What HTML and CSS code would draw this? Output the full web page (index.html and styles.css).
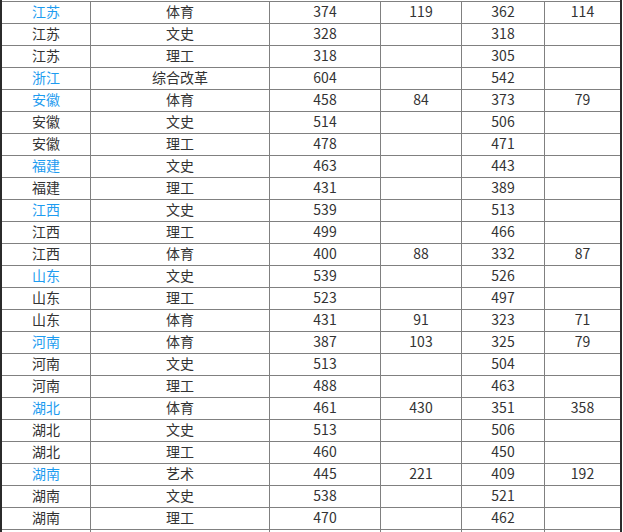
FILE: index.html
```html
<!DOCTYPE html>
<html lang="zh-CN">
<head>
<meta charset="utf-8">
<title>录取分数</title>
<link rel="stylesheet" href="styles.css">
</head>
<body>
<div class="sheet">
  <div class="grid">
    <div class="c prov first">江苏</div><div class="c">体育</div><div class="c">374</div><div class="c">119</div><div class="c">362</div><div class="c">114</div>
    <div class="c prov">江苏</div><div class="c">文史</div><div class="c">328</div><div class="c"></div><div class="c">318</div><div class="c"></div>
    <div class="c prov">江苏</div><div class="c">理工</div><div class="c">318</div><div class="c"></div><div class="c">305</div><div class="c"></div>
    <div class="c prov first">浙江</div><div class="c">综合改革</div><div class="c">604</div><div class="c"></div><div class="c">542</div><div class="c"></div>
    <div class="c prov first">安徽</div><div class="c">体育</div><div class="c">458</div><div class="c">84</div><div class="c">373</div><div class="c">79</div>
    <div class="c prov">安徽</div><div class="c">文史</div><div class="c">514</div><div class="c"></div><div class="c">506</div><div class="c"></div>
    <div class="c prov">安徽</div><div class="c">理工</div><div class="c">478</div><div class="c"></div><div class="c">471</div><div class="c"></div>
    <div class="c prov first">福建</div><div class="c">文史</div><div class="c">463</div><div class="c"></div><div class="c">443</div><div class="c"></div>
    <div class="c prov">福建</div><div class="c">理工</div><div class="c">431</div><div class="c"></div><div class="c">389</div><div class="c"></div>
    <div class="c prov first">江西</div><div class="c">文史</div><div class="c">539</div><div class="c"></div><div class="c">513</div><div class="c"></div>
    <div class="c prov">江西</div><div class="c">理工</div><div class="c">499</div><div class="c"></div><div class="c">466</div><div class="c"></div>
    <div class="c prov">江西</div><div class="c">体育</div><div class="c">400</div><div class="c">88</div><div class="c">332</div><div class="c">87</div>
    <div class="c prov first">山东</div><div class="c">文史</div><div class="c">539</div><div class="c"></div><div class="c">526</div><div class="c"></div>
    <div class="c prov">山东</div><div class="c">理工</div><div class="c">523</div><div class="c"></div><div class="c">497</div><div class="c"></div>
    <div class="c prov">山东</div><div class="c">体育</div><div class="c">431</div><div class="c">91</div><div class="c">323</div><div class="c">71</div>
    <div class="c prov first">河南</div><div class="c">体育</div><div class="c">387</div><div class="c">103</div><div class="c">325</div><div class="c">79</div>
    <div class="c prov">河南</div><div class="c">文史</div><div class="c">513</div><div class="c"></div><div class="c">504</div><div class="c"></div>
    <div class="c prov">河南</div><div class="c">理工</div><div class="c">488</div><div class="c"></div><div class="c">463</div><div class="c"></div>
    <div class="c prov first">湖北</div><div class="c">体育</div><div class="c">461</div><div class="c">430</div><div class="c">351</div><div class="c">358</div>
    <div class="c prov">湖北</div><div class="c">文史</div><div class="c">513</div><div class="c"></div><div class="c">506</div><div class="c"></div>
    <div class="c prov">湖北</div><div class="c">理工</div><div class="c">460</div><div class="c"></div><div class="c">450</div><div class="c"></div>
    <div class="c prov first">湖南</div><div class="c">艺术</div><div class="c">445</div><div class="c">221</div><div class="c">409</div><div class="c">192</div>
    <div class="c prov">湖南</div><div class="c">文史</div><div class="c">538</div><div class="c"></div><div class="c">521</div><div class="c"></div>
    <div class="c prov">湖南</div><div class="c">理工</div><div class="c">470</div><div class="c"></div><div class="c">462</div><div class="c"></div>
    <div class="c"></div><div class="c"></div><div class="c"></div><div class="c"></div><div class="c"></div><div class="c"></div>
  </div>
</div>
</body>
</html>
```

FILE: styles.css
```css
html, body {
  margin: 0;
  padding: 0;
  background: #fff;
}
body {
  font-family: "Noto Sans CJK SC", "Liberation Sans", sans-serif;
  font-size: 14px;
  color: #333;
  overflow: hidden;
}
.sheet {
  width: 618px;
  padding-top: 1px;
  border-left: 2px solid #2b2b2b;
  border-right: 2px solid #2b2b2b;
  background: #fff;
}
.grid {
  display: grid;
  grid-template-columns: 88px 178px 110px 80px 82px 75px;
  grid-auto-rows: 21px;
  gap: 1px;
  background: #808080;
  border-top: 1px solid #808080;
}
.c {
  background: #fff;
  text-align: center;
  line-height: 19px;
  height: 21px;
  box-sizing: border-box;
  padding-bottom: 2px;
  white-space: nowrap;
}
.prov.first {
  color: #1e9cf0;
}
```
